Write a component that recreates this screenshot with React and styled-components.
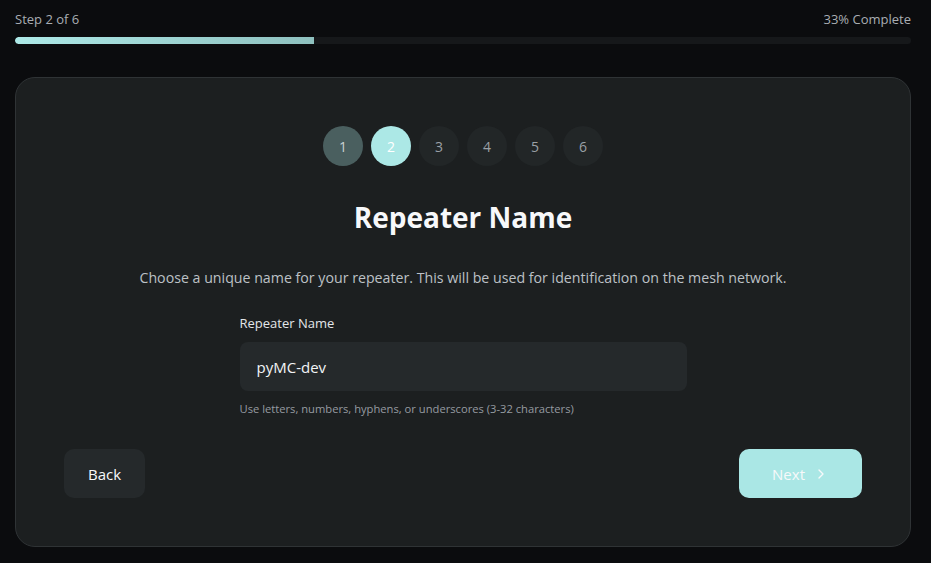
import styled, { createGlobalStyle } from "styled-components";

const GlobalStyle = createGlobalStyle`
    html, body {
        margin: 0;
        padding: 0;
        background: #0b0c0e;
    }

    body {
        font-family: "Open Sans", "Noto Sans", sans-serif;
        color: #f4f6f8;
    }

    * {
        box-sizing: border-box;
    }
`;

const STEPS = [1, 2, 3, 4, 5, 6];
const CURRENT = 2;

const StepDot = ({ n }) => {
    const state = n < CURRENT ? "done" : n === CURRENT ? "active" : "todo";
    return <Dot $state={state}>{n}</Dot>;
};

export default function App() {
    return (
        <>
            <GlobalStyle />
            <Page>
                <Header>
                    <HeaderText>Step {CURRENT} of {STEPS.length}</HeaderText>
                    <HeaderText>33% Complete</HeaderText>
                </Header>

                <Track>
                    <Fill style={{ width: `${(CURRENT / STEPS.length) * 100}%` }} />
                </Track>

                <Card>
                    <Dots>
                        {STEPS.map(n => <StepDot key={n} n={n} />)}
                    </Dots>

                    <Title>Repeater Name</Title>

                    <Description>
                        Choose a unique name for your repeater. This will be used for identification on the mesh network.
                    </Description>

                    <Field>
                        <Label htmlFor="repeater-name">Repeater Name</Label>
                        <Input id="repeater-name" defaultValue="pyMC-dev" />
                        <Hint>Use letters, numbers, hyphens, or underscores (3-32 characters)</Hint>
                    </Field>

                    <Actions>
                        <Button $variant="secondary">Back</Button>
                        <Button $variant="primary">
                            Next
                            <svg width="16" height="16" viewBox="0 0 24 24" fill="none" stroke="currentColor" strokeWidth="2" strokeLinecap="round" strokeLinejoin="round">
                                <path d="m9 18 6-6-6-6" />
                            </svg>
                        </Button>
                    </Actions>
                </Card>
            </Page>
        </>
    );
}

const Page = styled.div`
    padding: 10px 20px 16px 15px;
    display: flex;
    flex-direction: column;
`;

const Header = styled.div`
    display: flex;
    justify-content: space-between;
    align-items: center;
    height: 18px;
`;

const HeaderText = styled.span`
    font-size: 13px;
    color: #a9aeb3;
`;

const Track = styled.div`
    margin-top: 9px;
    height: 7px;
    border-radius: 4px;
    background: #16181a;
    overflow: hidden;
`;

const Fill = styled.div`
    height: 100%;
    border-radius: 4px 0 0 4px;
    background: linear-gradient(90deg, #ade9e7 0%, #8fc1bf 100%);
`;

const Card = styled.div`
    margin-top: 33px;
    height: 470px;
    border: 1px solid #2f3335;
    border-radius: 20px;
    background: #1c1f20;
    padding: 48px 48px 0;
    display: flex;
    flex-direction: column;
    align-items: center;
`;

const Dots = styled.div`
    display: flex;
    gap: 8px;
`;

const Dot = styled.div`
    width: 40px;
    height: 40px;
    border-radius: 50%;
    display: flex;
    align-items: center;
    justify-content: center;
    font-size: 14px;
    background: ${p => p.$state === "done" ? "#4a5f5f" : p.$state === "active" ? "#ace8e6" : "#222627"};
    color: ${p => p.$state === "todo" ? "#9aa0a6" : p.$state === "done" ? "#c9d2d2" : "#ffffff"};
`;

const Title = styled.h2`
    margin: 31px 0 0;
    font-size: 28px;
    font-weight: 700;
    line-height: 40px;
    color: #f7f8fa;
`;

const Description = styled.p`
    margin: 30px 0 0;
    font-size: 14.2px;
    line-height: 22px;
    color: #bcc1c6;
    text-align: center;
`;

const Field = styled.div`
    margin-top: 25px;
    width: 447px;
    display: flex;
    flex-direction: column;
`;

const Label = styled.label`
    font-size: 13px;
    line-height: 18px;
    color: #e3e6e9;
`;

const Input = styled.input`
    margin-top: 10px;
    height: 49px;
    padding: 0 17px;
    border: none;
    border-radius: 8px;
    background: #25292b;
    font-family: inherit;
    font-size: 15px;
    color: #f2f4f6;
    outline: none;
`;

const Hint = styled.span`
    margin-top: 10px;
    font-size: 11.2px;
    line-height: 16px;
    color: #969ba1;
`;

const Actions = styled.div`
    margin-top: 32px;
    align-self: stretch;
    display: flex;
    justify-content: space-between;
`;

const Button = styled.button`
    height: 49px;
    border: none;
    border-radius: 10px;
    display: flex;
    align-items: center;
    gap: 8px;
    font-family: inherit;
    font-size: 15px;
    cursor: pointer;
    padding: ${p => p.$variant === "primary" ? "0 33px 0 33px" : "0 24px"};
    background: ${p => p.$variant === "primary" ? "#aae7e5" : "#25292b"};
    color: #f7f9fa;
`;
